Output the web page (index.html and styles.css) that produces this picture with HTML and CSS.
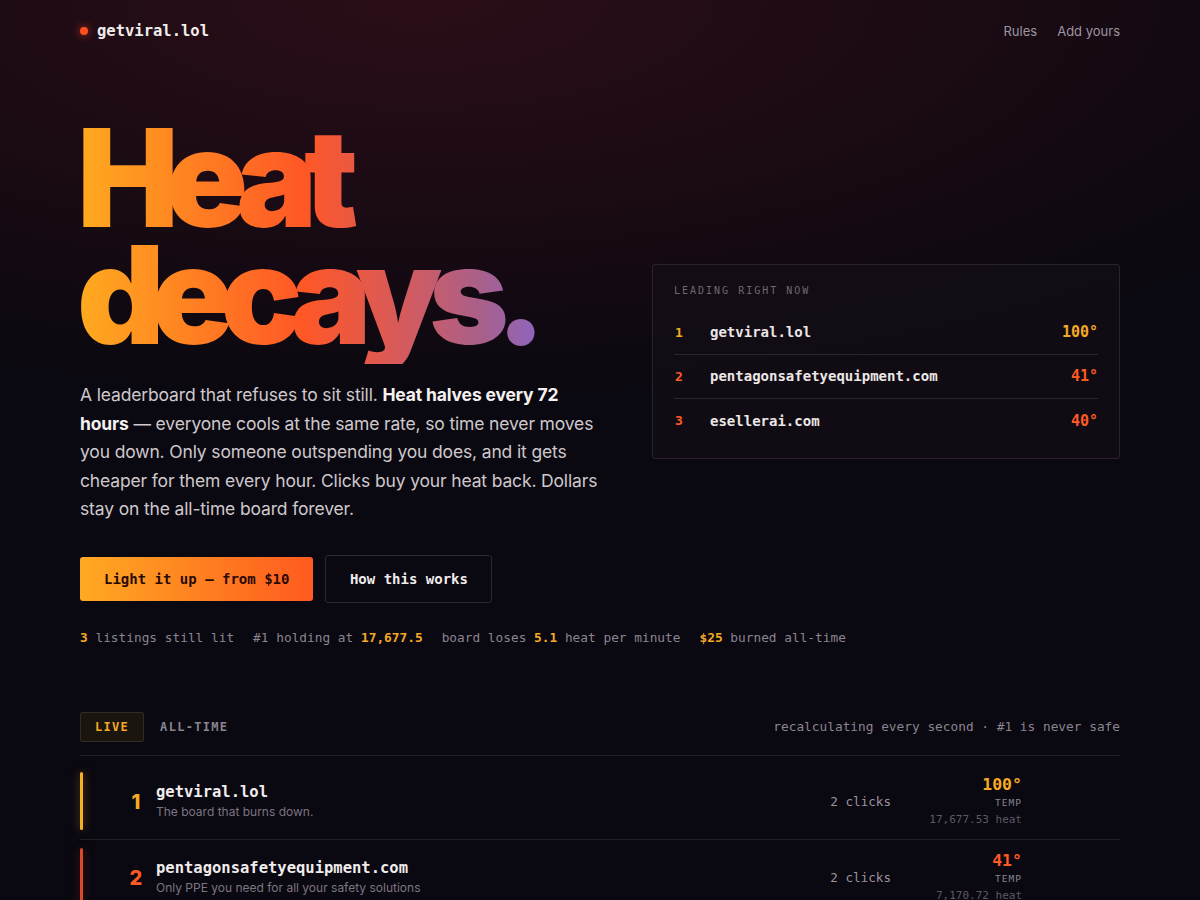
FILE: index.html
```html
<!DOCTYPE html>
<html lang="en">
<head>
  <meta charset="UTF-8" />
  <meta name="viewport" content="width=device-width, initial-scale=1" />
  <title>getviral.lol — Heat decays.</title>
  <link rel="stylesheet" href="styles.css">
</head>
<body>
  <div class="page">

    <!-- Top nav -->
    <header class="nav">
      <a class="brand" href="#"><span class="brand-dot"></span>getviral.lol</a>
      <nav class="nav-links">
        <a href="#">Rules</a>
        <a href="#">Add yours</a>
      </nav>
    </header>

    <!-- Hero -->
    <section class="hero">
      <div class="hero-copy">
        <h1 class="headline"><span>Heat<br>decays.</span></h1>
        <p class="lede">A leaderboard that refuses to sit still. <strong>Heat halves every 72 hours</strong> — everyone cools at the same rate, so time never moves you down. Only someone outspending you does, and it gets cheaper for them every hour. Clicks buy your heat back. Dollars stay on the all-time board forever.</p>
        <div class="actions">
          <a class="btn btn-hot" href="#">Light it up — from $10</a>
          <a class="btn btn-ghost" href="#">How this works</a>
        </div>
      </div>

      <aside class="leader-card">
        <div class="card-label">Leading right now</div>
        <ul class="leader-list">
          <li class="leader rank-1"><span class="l-rank">1</span><span class="l-name">getviral.lol</span><span class="l-temp">100°</span></li>
          <li class="leader rank-2"><span class="l-rank">2</span><span class="l-name">pentagonsafetyequipment.com</span><span class="l-temp">41°</span></li>
          <li class="leader rank-3"><span class="l-rank">3</span><span class="l-name">esellerai.com</span><span class="l-temp">40°</span></li>
        </ul>
      </aside>
    </section>

    <div class="stats">
      <span><b>3</b> listings still lit</span>
      <span>#1 holding at <b>17,677.5</b></span>
      <span>board loses <b>5.1</b> heat per minute</span>
      <span><b>$25</b> burned all-time</span>
    </div>

    <!-- Board -->
    <section class="board">
      <div class="tabs">
        <div class="tab active">Live</div>
        <div class="tab">All-time</div>
        <div class="tabs-note">recalculating every second · #1 is never safe</div>
      </div>

      <div class="rows">
        <div class="row row-1">
          <span class="bar"></span>
          <span class="rank">1</span>
          <div class="row-main">
            <div class="row-name">getviral.lol</div>
            <div class="row-desc">The board that burns down.</div>
          </div>
          <div class="clicks">2 clicks</div>
          <div class="temp">
            <div class="deg">100°</div>
            <div class="temp-label">Temp</div>
            <div class="heat">17,677.53 heat</div>
          </div>
        </div>

        <div class="row row-2">
          <span class="bar"></span>
          <span class="rank">2</span>
          <div class="row-main">
            <div class="row-name">pentagonsafetyequipment.com</div>
            <div class="row-desc">Only PPE you need for all your safety solutions</div>
          </div>
          <div class="clicks">2 clicks</div>
          <div class="temp">
            <div class="deg">41°</div>
            <div class="temp-label">Temp</div>
            <div class="heat">7,170.72 heat</div>
          </div>
        </div>
      </div>
    </section>
  </div>
</body>
</html>
```

FILE: styles.css
```css
* { box-sizing: border-box; margin: 0; padding: 0; }
html, body { height: 100%; }

body {
  font-family: Inter, "Noto Sans", sans-serif;
  color: #e9e5e6;
  background:
    radial-gradient(ellipse 90% 45% at 35% 0%, rgba(70,18,30,0.55), rgba(10,8,16,0) 100%),
    #0a0810;
  overflow: hidden;
}

a { color: inherit; text-decoration: none; }

.page {
  width: 1040px;
  margin: 0 auto;
}

/* Nav */
.nav {
  height: 61px;
  display: flex;
  align-items: center;
  justify-content: space-between;
}
.brand {
  display: flex;
  align-items: center;
  gap: 9px;
  font-family: "DejaVu Sans Mono", monospace;
  font-weight: 700;
  font-size: 15.5px;
  color: #f1ecec;
}
.brand-dot {
  width: 8px; height: 8px;
  border-radius: 50%;
  background: #ff4f1f;
  box-shadow: 0 0 8px rgba(255,80,30,0.7);
}
.nav-links { display: flex; gap: 20px; }
.nav-links a { font-size: 13px; color: #9d95a0; }

/* Hero */
.hero {
  display: grid;
  grid-template-columns: 1fr 468px;
  gap: 52px;
  align-items: center;
  padding-top: 59px;
}
.headline {
  font-family: Inter, sans-serif;
  font-weight: 900;
  font-size: 136px;
  line-height: 0.86;
  letter-spacing: -0.098em;
  margin-left: -3px;
}
.headline span {
  display: inline-block;
  padding-right: 16px;
  padding-bottom: 10px;
  background: linear-gradient(90deg, #ffab1f 0%, #ff7a22 28%, #ff5726 48%, #d85a5a 68%, #a8608c 86%, #8866c8 100%);
  -webkit-background-clip: text;
  background-clip: text;
  color: transparent;
}
.lede {
  margin-top: 17px;
  font-size: 17.5px;
  letter-spacing: -0.15px;
  line-height: 28.6px;
  color: #cfc8cc;
  max-width: 520px;
}
.lede strong { color: #f6f1f1; font-weight: 700; }

.actions {
  display: flex;
  align-items: center;
  gap: 12px;
  margin-top: 31px;
}
.btn {
  font-family: "DejaVu Sans Mono", monospace;
  font-weight: 700;
  font-size: 14px;
  border-radius: 3px;
  display: inline-flex;
  align-items: center;
}
.btn-hot {
  height: 44px;
  padding: 0 24px;
  background: linear-gradient(90deg, #ffa922, #ff5a1f);
  color: #2a0a05;
}
.btn-ghost {
  height: 48px;
  padding: 0 23.5px;
  border: 1px solid #2c2733;
  color: #f0ecec;
}

/* Leader card */
.leader-card {
  background: rgba(20,14,22,0.75);
  border: 1px solid #2a2430;
  border-radius: 3px;
  padding: 20px 21px 15px;
}
.card-label {
  font-family: "DejaVu Sans Mono", monospace;
  font-size: 10px;
  letter-spacing: 2px;
  text-transform: uppercase;
  color: #6f6873;
  margin-bottom: 15px;
}
.leader-list { list-style: none; }
.leader {
  display: flex;
  align-items: center;
  height: 44px;
  font-family: "DejaVu Sans Mono", monospace;
  font-weight: 700;
  font-size: 14px;
  border-bottom: 1px solid #2a2530;
}
.leader:last-child { border-bottom: 0; }
.l-rank { width: 36px; padding-left: 1px; font-size: 13px; }
.l-name { flex: 1; color: #ece7e6; }
.l-temp { font-size: 15px; }
.rank-1 .l-rank, .rank-1 .l-temp { color: #f6a925; }
.rank-2 .l-rank, .rank-2 .l-temp,
.rank-3 .l-rank, .rank-3 .l-temp { color: #ff5a24; }

/* Stats strip */
.stats {
  display: flex;
  gap: 19px;
  margin-top: 27px;
  font-family: "DejaVu Sans Mono", monospace;
  font-size: 12.8px;
  color: #8b8490;
}
.stats b { color: #f6a925; }

/* Board */
.board { margin-top: 67px; }
.tabs {
  display: flex;
  align-items: center;
  gap: 16px;
  padding-bottom: 13px;
  border-bottom: 1px solid #231f29;
}
.tab {
  font-family: "DejaVu Sans Mono", monospace;
  font-weight: 700;
  font-size: 12px;
  letter-spacing: 1.3px;
  text-transform: uppercase;
  color: #8a8490;
  height: 30px;
  display: flex;
  align-items: center;
}
.tab.active {
  padding: 0 14px;
  background: #1b150f;
  border: 1px solid #332a22;
  border-radius: 2px;
  color: #f6a925;
}
.tabs-note {
  margin-left: auto;
  font-family: "DejaVu Sans Mono", monospace;
  font-size: 12.8px;
  color: #8b8490;
}

.rows { padding-top: 8px; }
.row {
  display: flex;
  align-items: center;
  padding: 8px 98px 9px 0;
  border-bottom: 1px solid #231f29;
}
.bar {
  width: 3px;
  height: 58px;
  border-radius: 2px;
  margin-right: 33px;
}
.row-1 .bar { background: #f6b028; box-shadow: 0 0 10px rgba(246,170,40,0.45); }
.row-2 .bar { background: #d84a2a; box-shadow: 0 0 10px rgba(220,70,40,0.35); }
.rank {
  width: 40px;
  text-align: center;
  font-family: Inter, sans-serif;
  font-weight: 800;
  font-size: 20px;
  padding-top: 2px;
}
.row-1 .rank, .row-1 .deg { color: #f6a925; }
.row-2 .rank, .row-2 .deg { color: #ff5a24; }
.row-main { flex: 1; }
.row-name {
  font-family: "DejaVu Sans Mono", monospace;
  font-weight: 700;
  font-size: 15.5px;
  color: #f1ecec;
}
.row-desc {
  margin-top: 3px;
  font-size: 12px;
  color: #7d7682;
}
.clicks {
  font-family: "DejaVu Sans Mono", monospace;
  font-size: 12.6px;
  color: #9b94a0;
  margin-top: 2px;
}
.temp {
  width: 131px;
  text-align: right;
  font-family: "DejaVu Sans Mono", monospace;
}
.deg { font-weight: 700; font-size: 16.5px; line-height: 20px; }
.temp-label {
  font-size: 9.5px;
  letter-spacing: 1px;
  text-transform: uppercase;
  color: #8a8490;
  margin-top: 2px;
}
.heat {
  font-size: 11px;
  color: #5f5964;
  margin-top: 5px;
}
```
